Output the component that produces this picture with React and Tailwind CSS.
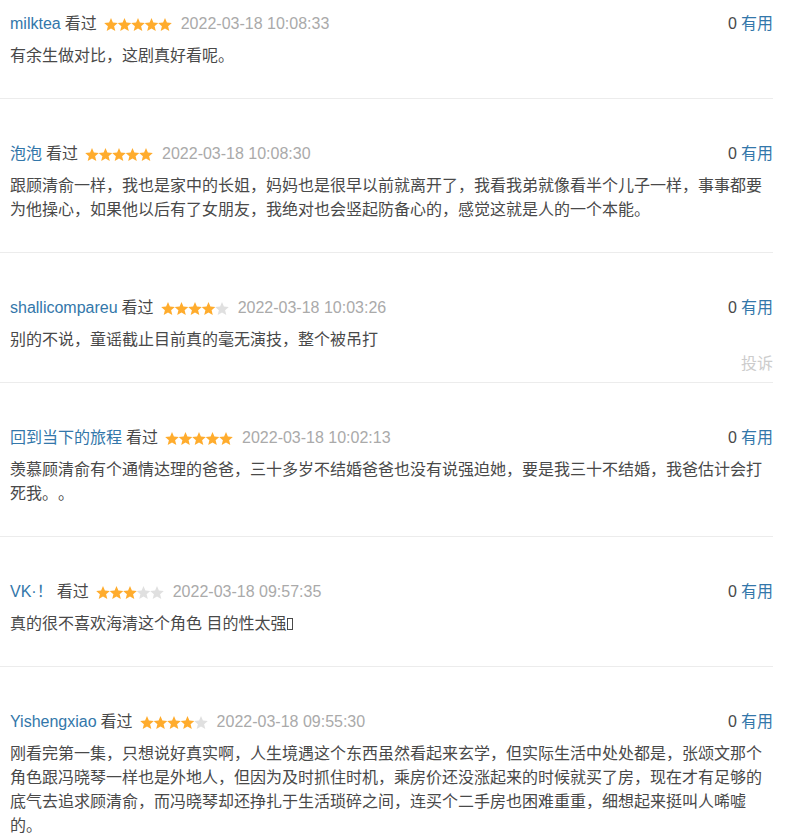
import React from "react";

const comments = [
  { name: "milktea", stars: 5, time: "2022-03-18 10:08:33", text: "有余生做对比，这剧真好看呢。" },
  { name: "泡泡", stars: 5, time: "2022-03-18 10:08:30", text: "跟顾清俞一样，我也是家中的长姐，妈妈也是很早以前就离开了，我看我弟就像看半个儿子一样，事事都要为他操心，如果他以后有了女朋友，我绝对也会竖起防备心的，感觉这就是人的一个本能。" },
  { name: "shallicompareu", stars: 4, time: "2022-03-18 10:03:26", text: "别的不说，童谣截止目前真的毫无演技，整个被吊打", report: true },
  { name: "回到当下的旅程", stars: 5, time: "2022-03-18 10:02:13", text: "羡慕顾清俞有个通情达理的爸爸，三十多岁不结婚爸爸也没有说强迫她，要是我三十不结婚，我爸估计会打死我。。" },
  { name: "VK·！", stars: 3, time: "2022-03-18 09:57:35", text: "真的很不喜欢海清这个角色 目的性太强", tofu: true },
  { name: "Yishengxiao", stars: 4, time: "2022-03-18 09:55:30", text: "刚看完第一集，只想说好真实啊，人生境遇这个东西虽然看起来玄学，但实际生活中处处都是，张颂文那个角色跟冯晓琴一样也是外地人，但因为及时抓住时机，乘房价还没涨起来的时候就买了房，现在才有足够的底气去追求顾清俞，而冯晓琴却还挣扎于生活琐碎之间，连买个二手房也困难重重，细想起来挺叫人唏嘘的。" },
];

function Stars({ n }) {
  const pts = "7,0 8.9,4.6 13.8,5 10.1,8.2 11.3,13 7,10.4 2.7,13 3.9,8.2 0.2,5 5.1,4.6";
  return (
    <svg width="68" height="13" viewBox="0 0 68 13" className="inline-block ml-[7px] mr-[9px] shrink-0">
      {[0, 1, 2, 3, 4].map((i) => (
        <polygon
          key={i}
          points={pts}
          transform={`translate(${i * 13.5},0)`}
          fill={i < n ? "#ffac2d" : "#e0e0e0"}
        />
      ))}
    </svg>
  );
}

export default function App() {
  return (
    <div
      className="w-[773px] bg-white text-[16px] text-[#494949] [text-spacing-trim:space-all]"
      style={{ fontFamily: '"Liberation Sans", Arial, "Noto Sans CJK SC", sans-serif' }}
    >
      {comments.map((c, idx) => (
        <div
          key={idx}
          className={`border-b border-[#ececec] pl-[10px] pb-[6px] ${idx === 0 ? "pt-[12px]" : "pt-[43px]"}`}
        >
          <div className="flex justify-between items-center leading-[24px] h-[24px]">
            <div className="flex items-center whitespace-nowrap">
              <span className="text-[#3377aa]">{c.name}</span>
              <span className="ml-[4px] text-[#494949]">看过</span>
              <Stars n={c.stars} />
              <span className="text-[#aaaaaa]">{c.time}</span>
            </div>
            <div className="whitespace-nowrap">
              <span className="text-[#494949]">0</span>
              <span className="ml-[4px] text-[#3377aa]">有用</span>
            </div>
          </div>
          <p className="mt-[8px] leading-[24px] text-[#494949] break-all">
            {c.text}
            {c.tofu && (
              <span className="inline-block w-[6px] h-[12px] border border-[#494949] ml-[1px] align-[-1px]" />
            )}
          </p>
          <div className={`text-right leading-[24px] h-[24px] text-[#cccccc] ${c.report ? "" : "invisible"}`}>
            投诉
          </div>
        </div>
      ))}
    </div>
  );
}
